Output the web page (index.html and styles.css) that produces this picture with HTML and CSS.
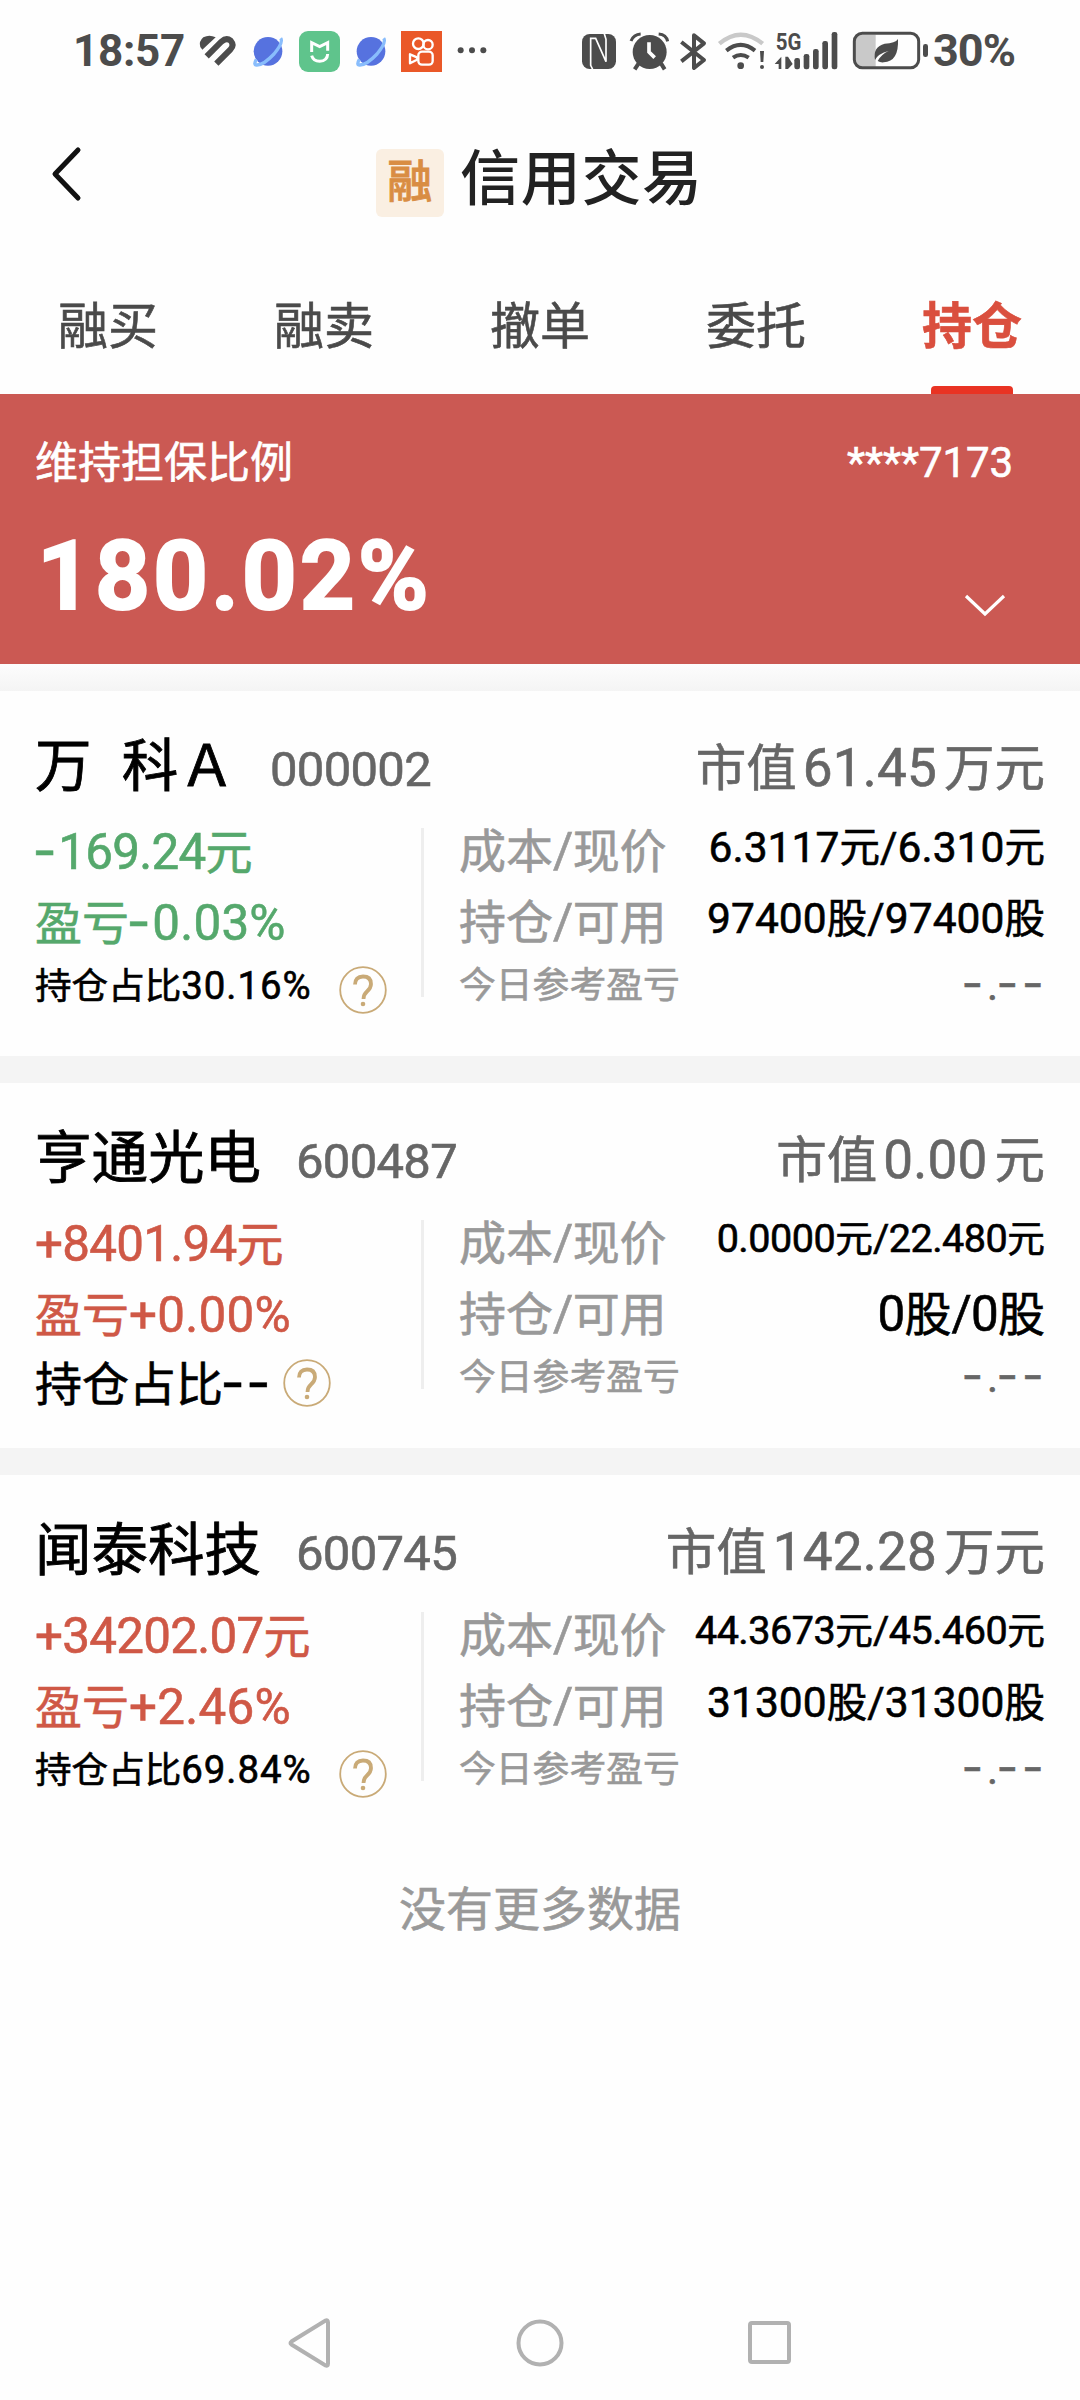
FILE: index.html
```html
<!DOCTYPE html>
<html lang="zh-CN">
<head>
<meta charset="utf-8">
<title>信用交易</title>
<link rel="stylesheet" href="styles.css">
</head>
<body>
<div class="statusbar">
  <span class="clock">18:57</span>
  <svg class="heart" width="40" height="90" viewBox="414 0 120 270"><path d="M427 119 467 82Q448 73 430 82 415 95 421 111Z" fill="#4c4c4c"/><path d="M440 139 484 95Q499 82 512 92 524 106 511 119L469 161" fill="none" stroke="#4c4c4c" stroke-width="18"/></svg>
  <svg class="planet" width="30" height="90" viewBox="580 0 90 270"><circle cx="625" cy="124" r="43" fill="#5672df"/><path d="M590 148Q580 166 592 165 612 165 643 132 672 97 663 85" fill="none" stroke="#89bdfc" stroke-width="10"/></svg>
  <svg class="mi" width="41" height="90" viewBox="717 0 123 270"><rect x="717" y="63" width="123" height="123" rx="27" fill="#5fc48c"/><path d="M755 126V98L779 110 803 98V122M755 137Q760 154 779 154 802 153 803 132" fill="none" stroke="#fff" stroke-width="9"/></svg>
  <svg class="planet2" width="30" height="90" viewBox="580 0 90 270"><circle cx="625" cy="124" r="43" fill="#5672df"/><path d="M590 148Q580 166 592 165 612 165 643 132 672 97 663 85" fill="none" stroke="#89bdfc" stroke-width="10"/></svg>
  <svg class="cam" width="41" height="90" viewBox="1023 0 123 270"><path d="M1023 63h123v123h-123z" fill="#ea5828"/><g fill="none" stroke="#fff" stroke-width="7"><circle cx="1075" cy="101" r="16"/><circle cx="1104" cy="104" r="14"/><rect x="1075" y="125" width="43" height="39" rx="11"/><path d="M1050 133V160L1071 149V142Z" stroke-linejoin="round"/></g></svg>
  <svg class="more" width="30" height="90" viewBox="1192 0 90 270" fill="#4c4c4c"><circle cx="1203" cy="121" r="9"/><circle cx="1237" cy="121" r="9"/><circle cx="1271" cy="121" r="9"/></svg>
  <svg class="system" width="350" height="90" viewBox="66 0 1050 270">
    <g fill="#4c4c4c">
      <rect x="66" y="72" width="102" height="105" rx="23"/>
      <path d="M99 180 92 166V85h15l31 70V88l-6-20" fill="none" stroke="#fff" stroke-width="5"/>
      <circle cx="269" cy="126" r="51"/><path d="M213 93Q221 73 242 72M296 72Q319 74 323 94" fill="none" stroke="#4c4c4c" stroke-width="9"/><path d="m236 160-12 18m79-18 11 18" stroke="#4c4c4c" stroke-width="12"/><path d="M267 97v29l17 17" fill="none" stroke="#fff" stroke-width="11"/>
      <path d="m364 96 68 54-30 24V76l30 24-68 54" fill="none" stroke="#4c4c4c" stroke-width="12" stroke-linejoin="round"/>
      <path d="M478 101Q542 47 608 101" fill="none" stroke="#c9c9c9" stroke-width="13"/>
      <path d="M499 122Q542 87 585 122M519 143Q542 127 566 143" fill="none" stroke="#4c4c4c" stroke-width="12"/><circle cx="542" cy="167" r="10"/><path d="M600 123h12l-2 33h-8Z"/><circle cx="606" cy="171" r="6"/>
      <text x="647" y="120" font-size="74" font-weight="700" textLength="77" lengthAdjust="spacingAndGlyphs">5G</text>
      <path d="M644 162l20-22v37h-8v-15ZM676 140h8l14 22-14 15h-8Z"/>
      <rect x="703" y="144" width="17" height="34" rx="7"/><rect x="731" y="132" width="17" height="46" rx="7"/><rect x="759" y="117" width="17" height="61" rx="7"/><rect x="787" y="93" width="17" height="85" rx="7"/><rect x="815" y="66" width="17" height="112" rx="7"/>
      <path d="M902 74h45v96h-45q-16 0-16-17V91q0-17 16-17Z" fill="#c9c9c9"/><rect x="883" y="70" width="193" height="103" rx="24" fill="none" stroke="#4c4c4c" stroke-width="9"/><rect x="1089" y="102" width="15" height="39" rx="7"/>
      <path d="M1014 87Q1017 155 971 157q-10 1-18-4 11-20 33-30-32 8-41 27-7-40 29-49 32-1 40-14Z"/>
    </g>
  </svg>
  <span class="charge">30%</span>
</div>

<header class="header">
  <svg class="back" width="34" height="60" viewBox="0 0 34 60"><path d="M28 6 5 30 28 54" fill="none" stroke="#111" stroke-width="5" stroke-linejoin="round" stroke-linecap="round"/></svg>
  <h1 class="title"><span class="badge">融</span>信用交易</h1>
</header>

<nav class="tabs">
  <span class="tab">融买</span><span class="tab">融卖</span><span class="tab">撤单</span><span class="tab">委托</span><span class="tab active">持仓</span>
</nav>

<section class="summary">
  <div class="summary-row"><span>维持担保比例</span><span class="account">****7173</span></div>
  <div class="summary-row"><strong class="ratio">180.02%</strong>
    <svg class="expand" width="42" height="24" viewBox="0 0 42 24"><path d="M2 2 21 20 40 2" fill="none" stroke="#fff" stroke-width="3.2"/></svg></div>
</section>
<div class="gap fade"></div>

<article class="card">
  <div class="card-head"><h2 class="name wide">万&nbsp; 科Ａ</h2><span class="code">000002</span><span class="value">市值<b>61.45</b>万元</span></div>
  <div class="card-body">
    <div class="profit">
      <span class="down"><i>-</i><b>169.24</b>元</span>
      <span class="down rate">盈亏<i>-</i><b>0.03%</b></span>
      <span class="share small"><span>持仓占比<b>30.16%</b></span><svg class="help" viewBox="0 0 48 48"><circle cx="24" cy="24" r="22.8"/><path d="M16 18.500Q16 10.500 24 10.500T32 18Q32 22 28 25.500 24.500 28.500 24.500 33"/><circle class="dot" cx="24" cy="38" r="2.300"/></svg></span>
    </div>
    <div class="detail">
      <div class="row"><span>成本<b>/</b>现价</span><span class="num s40"><b>6.3117</b>元<b>/6.310</b>元</span></div>
      <div class="row"><span>持仓<b>/</b>可用</span><span class="num s40"><b>97400</b>股<b>/97400</b>股</span></div>
      <div class="row last"><span>今日参考盈亏</span><span class="none"><i>-</i>.<i>--</i></span></div>
    </div>
  </div>
</article>
<div class="gap"></div>

<article class="card">
  <div class="card-head"><h2 class="name">亨通光电</h2><span class="code">600487</span><span class="value">市值<b>0.00</b>元</span></div>
  <div class="card-body">
    <div class="profit">
      <span class="up"><b>+8401.94</b>元</span>
      <span class="up rate">盈亏<b>+0.00%</b></span>
      <span class="share"><span>持仓占比<i>--</i></span><svg class="help" viewBox="0 0 48 48"><circle cx="24" cy="24" r="22.8"/><path d="M16 18.500Q16 10.500 24 10.500T32 18Q32 22 28 25.500 24.500 28.500 24.500 33"/><circle class="dot" cx="24" cy="38" r="2.300"/></svg></span>
    </div>
    <div class="detail">
      <div class="row"><span>成本<b>/</b>现价</span><span class="num s37"><b>0.0000</b>元<b>/22.480</b>元</span></div>
      <div class="row"><span>持仓<b>/</b>可用</span><span class="num s47"><b>0</b>股<b>/0</b>股</span></div>
      <div class="row last"><span>今日参考盈亏</span><span class="none"><i>-</i>.<i>--</i></span></div>
    </div>
  </div>
</article>
<div class="gap"></div>

<article class="card">
  <div class="card-head"><h2 class="name">闻泰科技</h2><span class="code">600745</span><span class="value">市值<b>142.28</b>万元</span></div>
  <div class="card-body">
    <div class="profit">
      <span class="up"><b>+34202.07</b>元</span>
      <span class="up rate">盈亏<b>+2.46%</b></span>
      <span class="share small"><span>持仓占比<b>69.84%</b></span><svg class="help" viewBox="0 0 48 48"><circle cx="24" cy="24" r="22.8"/><path d="M16 18.500Q16 10.500 24 10.500T32 18Q32 22 28 25.500 24.500 28.500 24.500 33"/><circle class="dot" cx="24" cy="38" r="2.300"/></svg></span>
    </div>
    <div class="detail">
      <div class="row"><span>成本<b>/</b>现价</span><span class="num s37"><b>44.3673</b>元<b>/45.460</b>元</span></div>
      <div class="row"><span>持仓<b>/</b>可用</span><span class="num s40"><b>31300</b>股<b>/31300</b>股</span></div>
      <div class="row last"><span>今日参考盈亏</span><span class="none"><i>-</i>.<i>--</i></span></div>
    </div>
  </div>
</article>
<p class="end">没有更多数据</p>

<footer class="navbar">
  <svg width="44" height="50" viewBox="0 0 44 50"><path d="M37.500 2.500Q40 1.500 40 4.500V45.500Q40 48.500 37.500 47.500L3.500 26.500Q1.500 25 3.500 23.500Z"/></svg>
  <svg width="48" height="48" viewBox="0 0 48 48"><circle cx="24" cy="24" r="21.500"/></svg>
  <svg width="44" height="44" viewBox="0 0 44 44"><rect x="2" y="2" width="39" height="39" rx="2"/></svg>
</footer>
</body>
</html>
```
FILE: styles.css
```css
* { box-sizing: border-box; }
body {
  margin: 0;
  width: 1080px;
  height: 2400px;
  display: flex;
  flex-direction: column;
  background: #fefefe;
  color: #000;
  font-family: Roboto, "Noto Sans CJK SC", sans-serif;
  white-space: nowrap;
}
svg { display: block; flex: none; }
b { font-weight: inherit; font-size: 1.05em; letter-spacing: -0.015em; }
i { font-style: normal; font-family: Inter, sans-serif; font-size: 1.12em; line-height: 1; letter-spacing: 0.03em; margin-left: -0.05em; }

.statusbar { height: 102px; display: flex; padding-left: 73px; color: #4c4c4c; font-weight: 700; line-height: 102px; }
.statusbar svg { margin-top: 10px; }
.clock { width: 115px; font-size: 44px; letter-spacing: -0.3px; margin-right: 10px; }
.planet { margin-left: 15px; }
.mi { margin-left: 16px; }
.planet2 { margin-left: 16px; }
.cam { margin-left: 15px; }
.more { margin-left: 15px; }
.statusbar .system { margin-left: 95px; }
.charge { margin-left: 1px; font-size: 45px; letter-spacing: -1px; }

.header { height: 158px; display: flex; align-items: center; padding: 0 48px 0 50px; }
.back { margin-top: -14px; }
.title { margin: -2px 0 0 292px; display: flex; align-items: center; gap: 16px; font-size: 60px; font-weight: 500; color: #222; line-height: 80px; letter-spacing: 0.7px; }
.badge { width: 68px; height: 68px; margin-top: 5px; border-radius: 6px; background: #faefe2; color: #d98d43; font-size: 45px; line-height: 68px; text-align: center; -webkit-text-stroke: 0.8px; }

.tabs { height: 134px; display: flex; font-size: 50px; line-height: 134px; color: #4a4a4a; -webkit-text-stroke: 0.6px; }
.tab { flex: 1; display: flex; flex-direction: column; align-items: center; }
.active { color: #da4f3e; font-weight: 700; }
.active::after { content: ""; width: 82px; height: 8px; margin-top: -8px; border-radius: 4px 4px 0 0; background: #e93323; }

.summary { height: 270px; padding: 34px 67px 0 35px; background: #cb5953; color: #fff; font-size: 43px; -webkit-text-stroke: 0.6px; }
.summary-row { display: flex; justify-content: space-between; line-height: 70px; }
.account { font-size: 42px; letter-spacing: -0.1px; }
.ratio { margin-left: 2px; font-size: 96px; letter-spacing: 2.9px; line-height: 156px; -webkit-text-stroke: 2px; }
.expand { margin: 96px 7px 0 0; }

.gap { height: 27px; background: #f4f4f4; }
.fade { background: linear-gradient(#fdfdfd, #f4f4f4); }

.card { height: 365px; padding: 36px 35px 0 35px; -webkit-text-stroke: 0.6px; }
.card-head { height: 80px; display: flex; align-items: baseline; line-height: 80px; color: #666; }
.name { margin: 0; width: 228px; font-size: 56.5px; font-weight: 400; color: #000; white-space: pre; -webkit-text-stroke: 0.8px; }
.wide { width: 202px; letter-spacing: 0.7px; }
.code { margin-left: 33px; font-size: 49px; letter-spacing: -0.7px; }
.value { margin-left: auto; font-size: 50.5px; }
.value b { margin: 0 7px 0 6px; letter-spacing: 0.2px; }
.card-body { display: flex; padding-top: 21px; font-size: 47px; }
.profit { width: 386px; height: 180px; display: flex; flex-direction: column; line-height: 71px; margin-top: -11px; }
.profit > span { height: 71px; }
.rate b { letter-spacing: 0.005em; }
.down { color: #55a86c; }
.up { color: #cf5846; }
.share { display: flex; align-items: center; gap: 11px; line-height: 67px; }
.profit > .small { font-size: 36.6px; height: 62px; gap: 27px; line-height: 53px; align-items: flex-start; }
.small b { letter-spacing: 0.024em; }
.help { width: 48px; height: 48px; fill: none; stroke: #c9aa77; stroke-width: 1.8; margin-top: -4px; }
.help path { stroke-width: 3.8; }
.help .dot { fill: #c9aa77; stroke: none; }
.small .help { margin-top: 7px; }
.detail { flex: 1; height: 169px; border-left: 3px solid #eee; padding-left: 35px; color: #999; }
.row { height: 71px; display: flex; justify-content: space-between; line-height: 71px; position: relative; top: -12px; }
.num { color: #000; line-height: 64px; }
.s47 { line-height: 71px; }
.s40 { font-size: 40.5px; }
.s40 b { letter-spacing: 0.001em; }
.s37 { font-size: 37.7px; line-height: 61px; }
.s37 b { letter-spacing: -0.013em; }
.last { font-size: 36.8px; height: 55px; line-height: 55px; }
.none { color: #666; font-size: 42px; letter-spacing: 0.02em; }
.none i { letter-spacing: 0.08em; }
.none i:last-child { margin-right: -0.05em; }

.end { margin: 30px 0 0; text-align: center; color: #999; font-size: 47px; line-height: 80px; -webkit-text-stroke: 0.6px; }
.navbar { margin-top: auto; height: 114px; display: flex; align-items: center; justify-content: center; gap: 184px; fill: none; stroke: #b1b1b1; stroke-width: 4; }
```
